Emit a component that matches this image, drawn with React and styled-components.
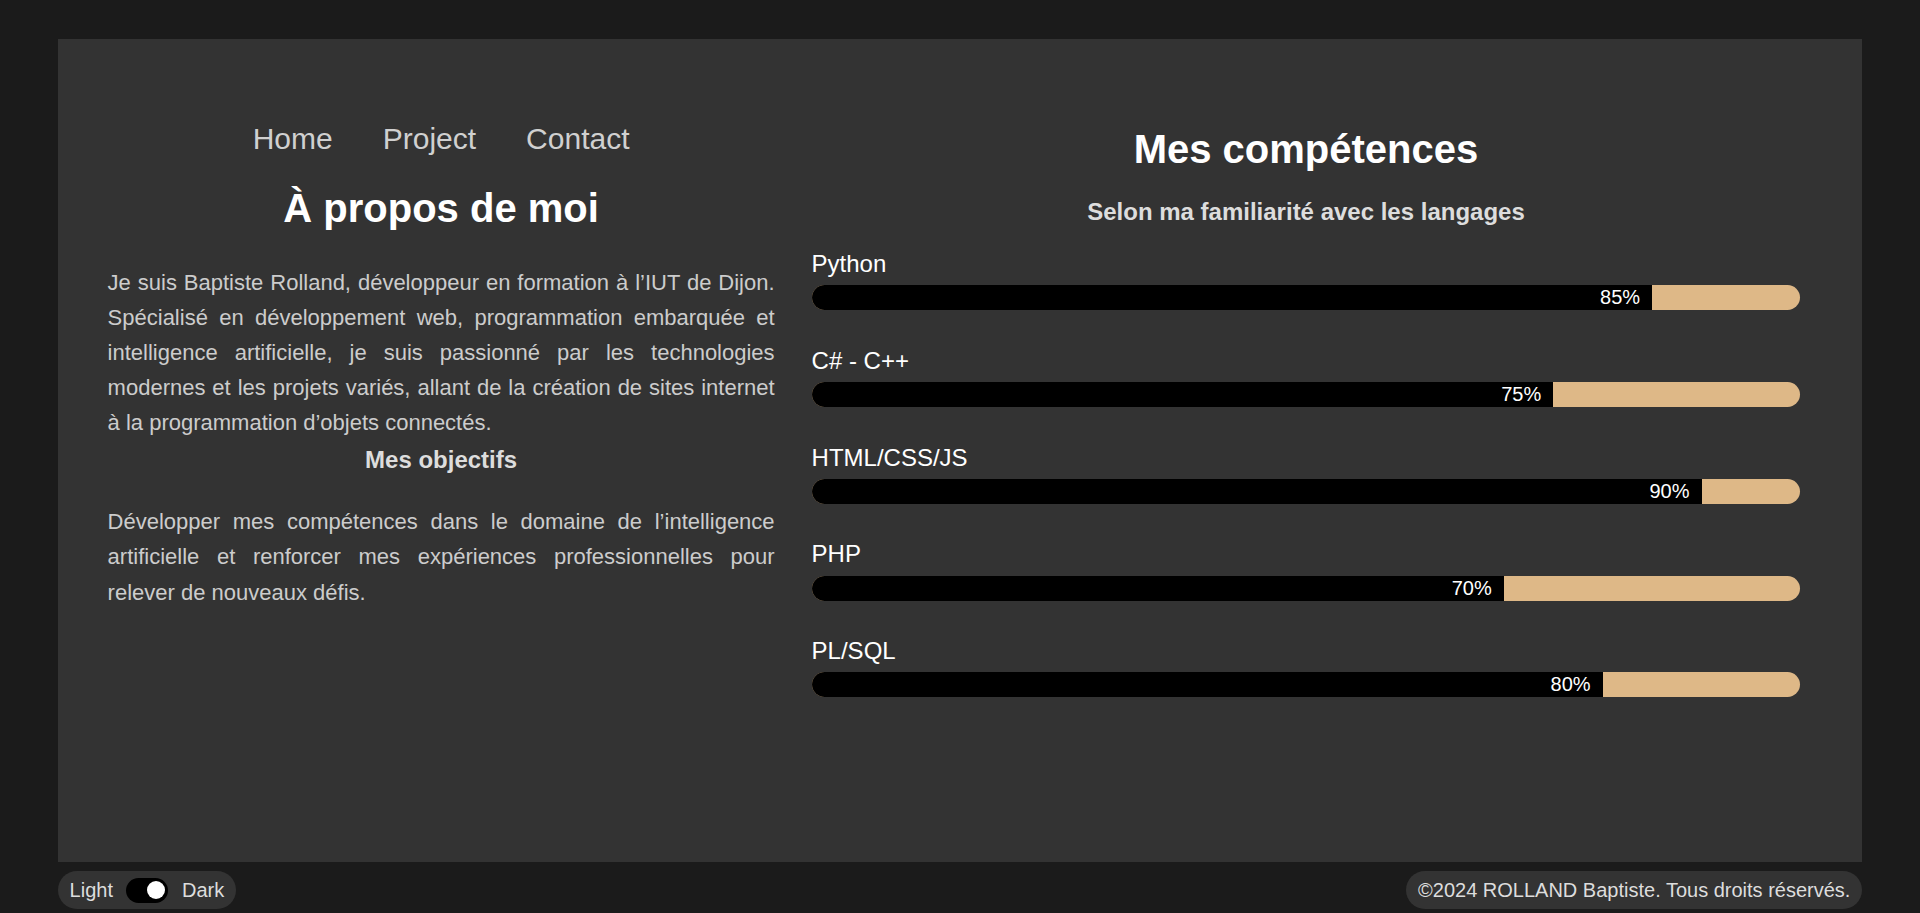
import styled, { createGlobalStyle } from "styled-components";

const GlobalStyle = createGlobalStyle`
  html, body {
    margin: 0;
    padding: 0;
    background: #1b1b1b;
    font-family: "Liberation Sans", Arial, sans-serif;
  }
  * { box-sizing: border-box; }
`;

const Page = styled.div`
  width: 94%;
  margin: 0 auto;
  padding-top: 39px;
`;

const Panel = styled.main`
  height: 823px;
  background: #333333;
  display: grid;
  grid-template-columns: 667px 1fr;
  column-gap: 37px;
  padding: 0 62px 0 50px;
`;

const LeftCol = styled.section`
  padding-top: 83px;
`;

const RightCol = styled.section`
  padding-top: 87px;
`;

const Nav = styled.nav`
  display: flex;
  justify-content: center;
  gap: 50px;
`;

const NavLink = styled.a`
  font-size: 30px;
  line-height: 34.5px;
  color: #d0d0d0;
  text-decoration: none;
  cursor: pointer;
`;

const Title = styled.h1`
  margin: 28px 0 34px;
  font-size: 40px;
  line-height: 46px;
  font-weight: 700;
  color: #ffffff;
  text-align: center;
`;

const Heading = styled.h2`
  margin: 0;
  font-size: 40px;
  line-height: 46px;
  font-weight: 700;
  color: #ffffff;
  text-align: center;
`;

const SubTitle = styled.h3`
  margin: ${(p) => p.$margin || "0"};
  font-size: 24px;
  line-height: 27.6px;
  font-weight: 700;
  color: #dddddd;
  text-align: center;
`;

const Text = styled.p`
  margin: 0;
  font-size: 22px;
  line-height: 35.2px;
  color: #cccccc;
  text-align: justify;
`;

const SkillList = styled.div`
  margin-top: 24.5px;
  display: flex;
  flex-direction: column;
  gap: 36.7px;
`;

const Skill = styled.div``;

const SkillName = styled.div`
  font-size: 24px;
  line-height: 27.6px;
  color: #ffffff;
  margin-bottom: 7.5px;
`;

const Track = styled.div`
  height: 25px;
  border-radius: 12.5px;
  background: #deb887;
  overflow: hidden;
`;

const Fill = styled.div`
  height: 100%;
  background: #000000;
  color: #ffffff;
  font-size: 20px;
  line-height: 25px;
  text-align: right;
  padding-right: 12px;
`;

const Footer = styled.footer`
  display: flex;
  justify-content: space-between;
  align-items: center;
  margin-top: 9px;
`;

const Pill = styled.div`
  display: flex;
  align-items: center;
  gap: 13.5px;
  height: 38px;
  padding: 0 12px;
  border-radius: 19px;
  background: #333333;
  color: #dddddd;
  font-size: 20px;
`;

const Switch = styled.div`
  width: 42px;
  height: 25px;
  border-radius: 12.5px;
  background: #000000;
  display: flex;
  align-items: center;
  justify-content: flex-end;
  padding-right: 3px;
`;

const Knob = styled.span`
  width: 18px;
  height: 18px;
  border-radius: 50%;
  background: #ffffff;
`;

const skills = [
  { name: "Python", value: 85 },
  { name: "C# - C++", value: 75 },
  { name: "HTML/CSS/JS", value: 90 },
  { name: "PHP", value: 70 },
  { name: "PL/SQL", value: 80 },
];

const App = () => {
  return (
    <>
      <GlobalStyle />
      <Page>
        <Panel>
          <LeftCol>
            <Nav>
              <NavLink>Home</NavLink>
              <NavLink>Project</NavLink>
              <NavLink>Contact</NavLink>
            </Nav>
            <Title>À propos de moi</Title>
            <Text>
              Je suis Baptiste Rolland, développeur en formation à l’IUT de Dijon.
              Spécialisé en développement web, programmation embarquée et
              intelligence artificielle, je suis passionné par les technologies
              modernes et les projets variés, allant de la création de sites
              internet à la programmation d’objets connectés.
            </Text>
            <SubTitle $margin="5px 0 31px">Mes objectifs</SubTitle>
            <Text>
              Développer mes compétences dans le domaine de l’intelligence
              artificielle et renforcer mes expériences professionnelles pour
              relever de nouveaux défis.
            </Text>
          </LeftCol>

          <RightCol>
            <Heading>Mes compétences</Heading>
            <SubTitle $margin="26px 0 0">Selon ma familiarité avec les langages</SubTitle>
            <SkillList>
              {skills.map((s) => (
                <Skill key={s.name}>
                  <SkillName>{s.name}</SkillName>
                  <Track>
                    <Fill style={{ width: `${s.value}%` }}>{s.value}%</Fill>
                  </Track>
                </Skill>
              ))}
            </SkillList>
          </RightCol>
        </Panel>

        <Footer>
          <Pill>
            <span>Light</span>
            <Switch>
              <Knob />
            </Switch>
            <span>Dark</span>
          </Pill>
          <Pill>©2024 ROLLAND Baptiste. Tous droits réservés.</Pill>
        </Footer>
      </Page>
    </>
  );
};

export default App;
